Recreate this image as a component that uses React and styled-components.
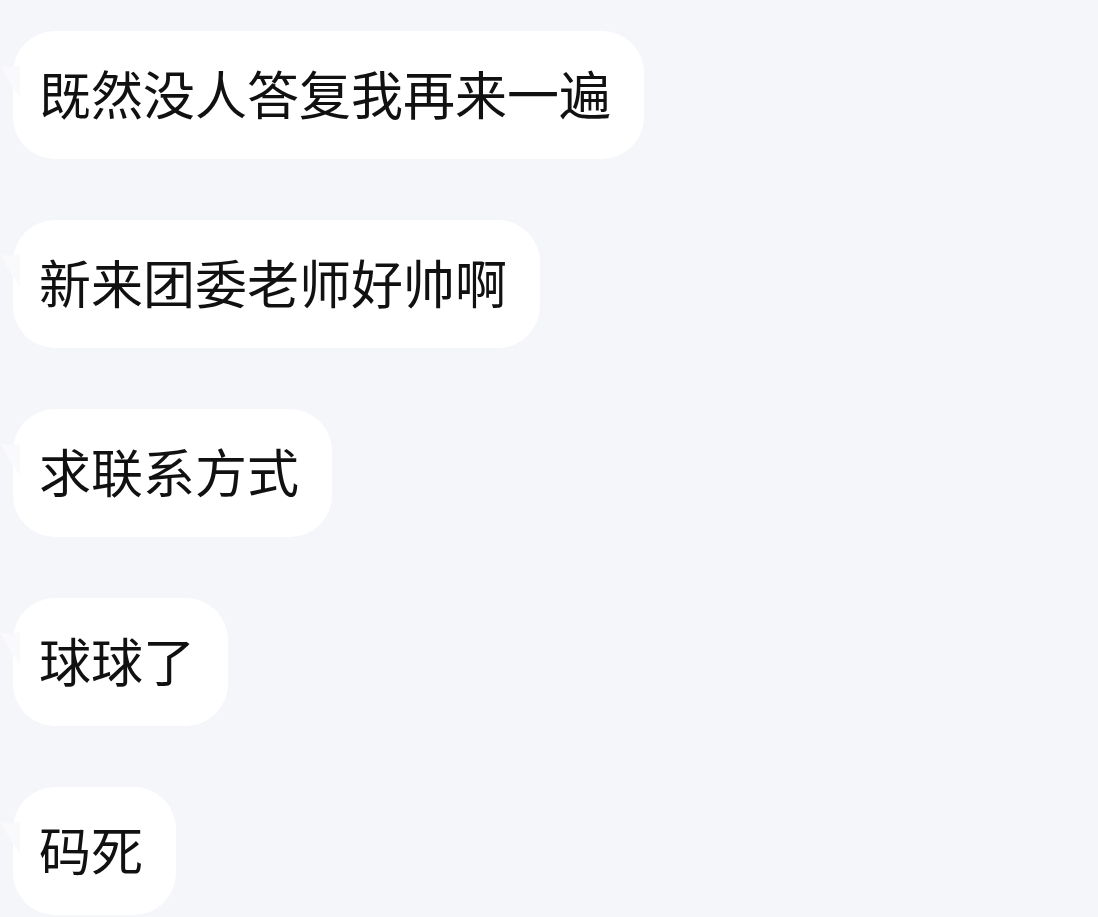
import React from "react";
import styled, { createGlobalStyle } from "styled-components";

const Global = createGlobalStyle`
  html, body { margin: 0; padding: 0; background: #f5f6fa; }
  body { font-family: "Noto Sans CJK SC", "Noto Sans", sans-serif; }
`;

const Chat = styled.div`
  display: flex;
  flex-direction: column;
  align-items: flex-start;
  gap: 61px;
  padding: 31px 0 0 13px;
  min-height: 917px;
  box-sizing: border-box;
  background: #f5f6fa;
  overflow: hidden;
`;

const Bubble = styled.div`
  position: relative;
  display: flex;
  align-items: center;
  height: 128px;
  box-sizing: border-box;
  padding: 0 33px 4px 26px;
  background: #ffffff;
  border-radius: 42px;
  color: #111111;
  font-size: 52px;
  line-height: 1;
  white-space: nowrap;
`;

const Tail = styled.svg`
  position: absolute;
  left: -13px;
  top: 30px;
  width: 20px;
  height: 36px;
`;

const messages = [
  "既然没人答复我再来一遍",
  "新来团委老师好帅啊",
  "求联系方式",
  "球球了",
  "码死",
];

export default function App() {
  return (
    <>
      <Global />
      <Chat>
        {messages.map((m) => (
          <Bubble key={m}>
            <Tail viewBox="0 0 20 36">
              <path d="M20 4 C12 6 5 6 0 4 C5 12 10 24 20 36 Z" fill="#fafafd" />
            </Tail>
            {m}
          </Bubble>
        ))}
      </Chat>
    </>
  );
}
